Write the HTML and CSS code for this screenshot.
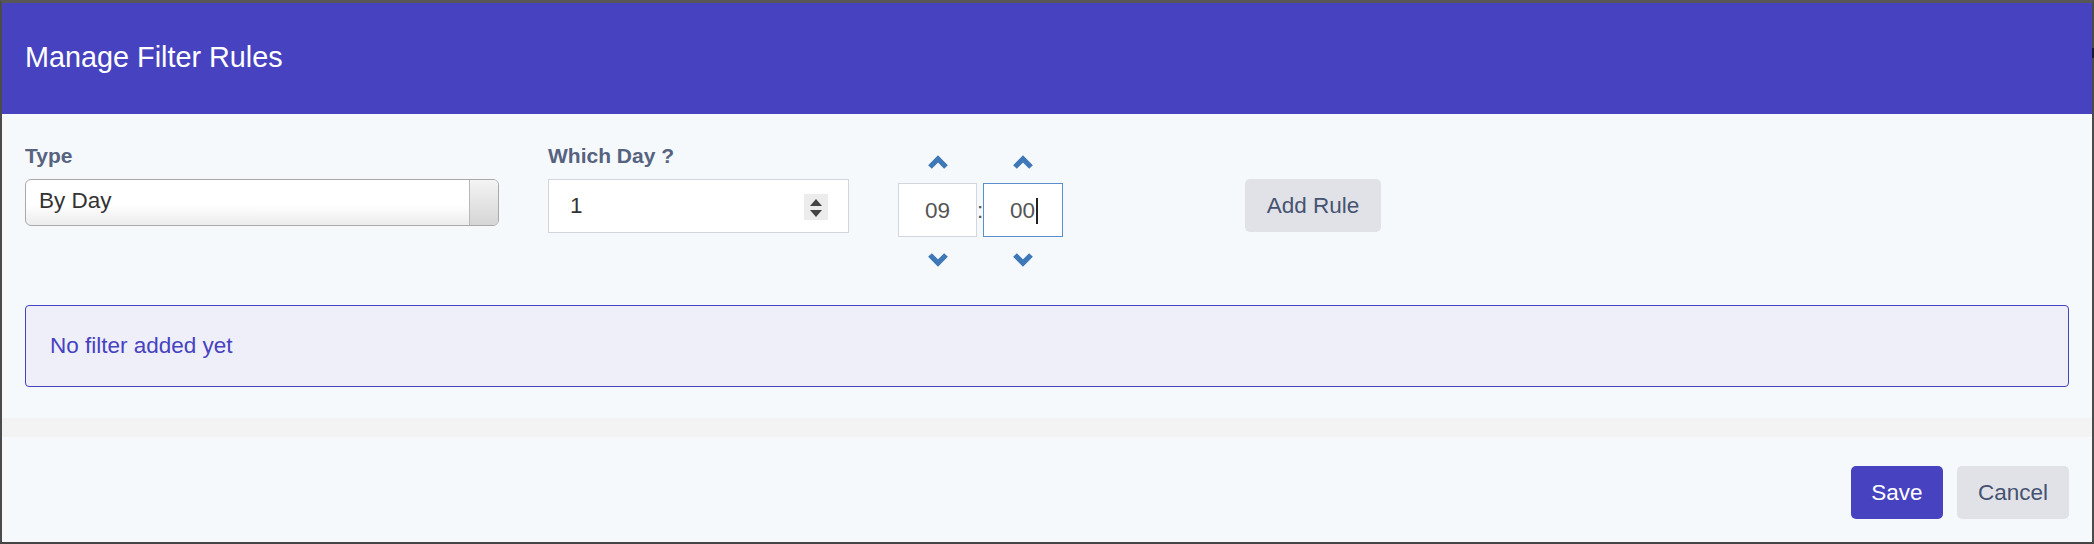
FILE: index.html
```html
<!DOCTYPE html>
<html lang="en">
<head>
<meta charset="utf-8">
<title>Manage Filter Rules</title>
<link rel="stylesheet" href="styles.css">
</head>
<body>
<div class="modal">
  <header class="modal-header">
    <h4 class="modal-title">Manage Filter Rules</h4>
    <span class="edge-mark"></span>
  </header>
  <div class="modal-body">
    <div class="rule-row">
      <div class="field field-type">
        <label class="field-label">Type</label>
        <div class="select">
          <span class="select-value">By Day</span>
          <span class="select-button"></span>
        </div>
      </div>
      <div class="field field-day">
        <label class="field-label">Which Day ?</label>
        <div class="number-input">
          <span class="number-value">1</span>
          <span class="spinner">
            <svg width="24" height="26" viewBox="0 0 24 26"><polygon points="6,12 12,5 18,12" fill="#444"/><polygon points="6,16 12,23 18,16" fill="#444"/></svg>
          </span>
        </div>
      </div>
      <div class="timepicker">
        <span class="tp-arrow"><svg width="22" height="14" viewBox="0 0 22 14"><polyline points="3,12 11,4 19,12" fill="none" stroke="#3f78b6" stroke-width="5.2"/></svg></span>
        <span></span>
        <span class="tp-arrow"><svg width="22" height="14" viewBox="0 0 22 14"><polyline points="3,12 11,4 19,12" fill="none" stroke="#3f78b6" stroke-width="5.2"/></svg></span>
        <span class="tp-input">09</span>
        <span class="tp-sep">:</span>
        <span class="tp-input tp-focus">00<span class="caret"></span></span>
        <span class="tp-arrow"><svg width="22" height="14" viewBox="0 0 22 14"><polyline points="3,2 11,10 19,2" fill="none" stroke="#3f78b6" stroke-width="5.2"/></svg></span>
        <span></span>
        <span class="tp-arrow"><svg width="22" height="14" viewBox="0 0 22 14"><polyline points="3,2 11,10 19,2" fill="none" stroke="#3f78b6" stroke-width="5.2"/></svg></span>
      </div>
      <div class="add-wrap">
        <button class="btn btn-light btn-add">Add Rule</button>
      </div>
    </div>
    <div class="empty-alert">No filter added yet</div>
  </div>
  <div class="divider-strip"></div>
  <footer class="modal-footer">
    <button class="btn btn-primary btn-save">Save</button>
    <button class="btn btn-light btn-cancel">Cancel</button>
  </footer>
</div>
</body>
</html>
```

FILE: styles.css
```css
* { box-sizing: border-box; }
html, body {
  margin: 0;
  padding: 0;
  background: #3a3a3a;
}
body {
  font-family: "Liberation Sans", Arial, Helvetica, sans-serif;
  font-size: 22.5px;
}
.modal {
  position: relative;
  width: 2094px;
  height: 544px;
  border-top: 3px solid #575757;
  border-left: 2px solid #4b4b4b;
  border-right: 2px solid #4b4b4b;
  border-bottom: 2px solid #454545;
  background: #f5f9fc;
  display: flex;
  flex-direction: column;
}
.modal-header {
  position: relative;
  height: 111px;
  background: #4642c0;
  display: flex;
  align-items: center;
  padding: 0 23px 2px;
}
.modal-title {
  margin: 0;
  color: #ffffff;
  font-weight: normal;
  font-size: 28.8px;
}
.edge-mark {
  position: absolute;
  right: -2px;
  top: 45px;
  width: 2px;
  height: 10px;
  background: #1c1c30;
}
.modal-body {
  padding: 27px 23px 31px 23px;
}
.rule-row {
  display: flex;
  align-items: flex-start;
}
.field-label {
  display: block;
  height: 30px;
  line-height: 30px;
  margin-bottom: 8px;
  font-weight: bold;
  font-size: 21px;
  color: #56637f;
}
.field-type {
  width: 474px;
  margin-right: 49px;
}
.field-day {
  width: 301px;
  margin-right: 49px;
}
.select {
  display: flex;
  height: 47px;
  border: 1px solid #a9a9a9;
  border-radius: 6px;
  background: linear-gradient(#ffffff 0%, #ffffff 55%, #ececec 100%);
  overflow: hidden;
}
.select-value {
  flex: 1;
  display: flex;
  align-items: center;
  padding: 0 0 4px 13px;
  color: #333333;
}
.select-button {
  width: 29px;
  border-left: 1px solid #b8b8b8;
  background: linear-gradient(#f4f4f4, #d5d5d5);
}
.number-input {
  display: flex;
  align-items: center;
  height: 54px;
  border: 1px solid #d2d6de;
  background: #ffffff;
  padding: 0 20px 0 21px;
  color: #333333;
}
.number-value { flex: 1; }
.spinner {
  display: block;
  width: 24px;
  height: 26px;
  background: #ececec;
  margin-top: 1px;
}
.spinner svg { display: block; }
.timepicker {
  display: grid;
  grid-template-columns: 79px 6px 80px;
  grid-template-rows: 42px 54px 45px;
  width: 165px;
  margin-right: 182px;
}
.tp-arrow {
  display: flex;
  align-items: center;
  justify-content: center;
}
.tp-arrow svg { display: block; }
.tp-input {
  display: flex;
  align-items: center;
  justify-content: center;
  border: 1px solid #d2d6de;
  background: #ffffff;
  color: #555555;
  padding-top: 2px;
}
.tp-focus {
  border-color: #5b8ecb;
  padding-left: 2px;
}
.caret {
  display: inline-block;
  width: 2px;
  height: 26px;
  background: #222222;
  margin-left: 1px;
}
.tp-sep {
  display: flex;
  align-items: center;
  justify-content: center;
  color: #555555;
  padding-top: 2px;
}
.add-wrap {
  padding-top: 38px;
}
.btn {
  font-family: "Liberation Sans", Arial, Helvetica, sans-serif;
  font-size: 22.5px;
  border: 0;
  border-radius: 5px;
  height: 53px;
  padding: 0;
  cursor: pointer;
}
.btn-light {
  background: #e1e2e7;
  color: #465370;
}
.btn-primary {
  background: #4642c0;
  color: #ffffff;
}
.btn-add { width: 136px; }
.btn-save { width: 92px; }
.btn-cancel { width: 112px; }
.empty-alert {
  margin-top: 23px;
  height: 82px;
  display: flex;
  align-items: center;
  padding: 0 0 0 24px;
  border: 1px solid #4642c0;
  border-radius: 4px;
  background: #efeff9;
  color: #4642c0;
}
.divider-strip {
  height: 19px;
  background: #f3f3f3;
}
.modal-footer {
  flex: 1;
  display: flex;
  justify-content: flex-end;
  align-items: flex-start;
  gap: 14px;
  padding: 29px 23px 0 0;
}
```
